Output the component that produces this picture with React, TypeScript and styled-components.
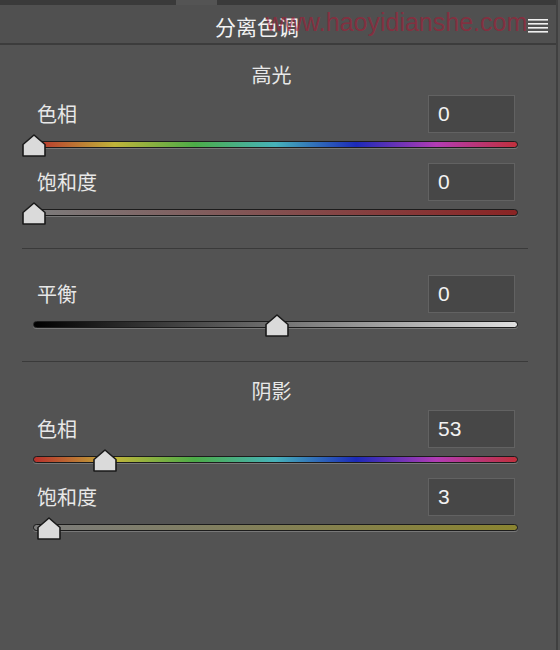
import React from 'react';
import styled, { createGlobalStyle } from 'styled-components';

const GlobalStyle = createGlobalStyle`
  body {
    margin: 0;
    background: #535353;
  }
`;

const Panel = styled.div`
  width: 556px;
  height: 650px;
  background: #535353;
  border-right: 2px solid #404040;
  font-family: 'Noto Sans CJK SC', 'Liberation Sans', sans-serif;
  color: #e8e8e8;
  overflow: hidden;
`;

const TopStrip = styled.div`
  display: flex;
  height: 5px;
  background: #3a3a3a;
`;

const Tab = styled.div`
  margin-left: 176px;
  width: 41px;
  background: #545454;
`;

const Header = styled.div`
  position: relative;
  display: grid;
  grid-template-columns: 514px 1fr;
  align-items: center;
  height: 38px;
  background: #505050;
  border-bottom: 2px solid #3c3c3c;
`;

const Title = styled.div`
  text-align: center;
  font-size: 21px;
  line-height: 24px;
  padding-top: 3px;
  color: #f2f2f2;
`;

const MenuButton = styled.div`
  display: flex;
  padding-left: 14px;
  padding-top: 3px;
`;

const Watermark = styled.div`
  position: absolute;
  top: 3px;
  left: 266px;
  font-family: 'Liberation Sans', Arial, sans-serif;
  font-size: 25px;
  color: rgba(175, 20, 50, 0.55);
  pointer-events: none;
  white-space: nowrap;
`;

const Body = styled.div`
  padding: 0 28px 0 22px;
`;

const SectionTitle = styled.div<{ $top: number; $bottom: number }>`
  height: 22px;
  line-height: 22px;
  padding-top: ${(p) => p.$top}px;
  padding-right: 7px;
  margin-bottom: ${(p) => p.$bottom}px;
  text-align: center;
  font-size: 20px;
`;

const Row = styled.div<{ $gap?: number }>`
  margin-top: ${(p) => p.$gap ?? 0}px;
`;

const RowTop = styled.div`
  display: flex;
  justify-content: space-between;
  align-items: center;
  height: 38px;
  padding: 0 13px 0 15px;
`;

const Label = styled.div`
  font-size: 20px;
  line-height: 24px;
`;

const ValueBox = styled.div`
  box-sizing: border-box;
  width: 87px;
  height: 38px;
  padding-left: 9px;
  background: #474747;
  border: 1px solid #626262;
  font-family: 'Liberation Sans', Arial, sans-serif;
  font-size: 21px;
  line-height: 36px;
  color: #f2f2f2;
`;

const TrackArea = styled.div`
  position: relative;
  box-sizing: border-box;
  height: 30px;
  padding-top: 8px;
  margin: 0 10px 0 11px;
`;

const Track = styled.div<{ $fill: string }>`
  box-sizing: border-box;
  height: 7px;
  border: 1px solid #1c1c1c;
  border-radius: 4px;
  background: ${(p) => p.$fill};
  box-shadow: 0 1px 0 rgba(255, 255, 255, 0.22);
`;

const Thumb = styled.svg`
  position: absolute;
  top: 1px;
  width: 24px;
  height: 23px;
`;

const Divider = styled.div<{ $top: number }>`
  height: 1px;
  margin-top: ${(p) => p.$top}px;
  background: #3a3a3a;
`;

const HUE =
  'linear-gradient(to right, #b8302c 0%, #c0b43a 16.7%, #4cac48 33.3%, #46b2ba 50%, #1c2ab8 66.7%, #b23cb4 83.3%, #c0303c 100%)';
const RED_SAT = 'linear-gradient(to right, #7c7c7c, #8a2424)';
const YELLOW_SAT = 'linear-gradient(to right, #7c7c7c, #8a8430)';
const BALANCE = 'linear-gradient(to right, #000, #e0e0e0)';

interface SliderProps {
  label: string;
  value: number;
  min: number;
  max: number;
  fill: string;
  gap?: number;
}

const Slider: React.FC<SliderProps> = ({ label, value, min, max, fill, gap }) => {
  const frac = (value - min) / (max - min);
  return (
    <Row $gap={gap}>
      <RowTop>
        <Label>{label}</Label>
        <ValueBox>{value}</ValueBox>
      </RowTop>
      <TrackArea>
        <Track $fill={fill} />
        <Thumb style={{ left: `calc(${frac * 100}% - 11px)` }} viewBox="0 0 24 23">
          <polygon
            points="12,1 23,10.5 23,22 1,22 1,10.5"
            fill="#dadada"
            stroke="#1a1a1a"
            strokeWidth="1.6"
            strokeLinejoin="round"
          />
        </Thumb>
      </TrackArea>
    </Row>
  );
};

const App: React.FC = () => (
  <>
    <GlobalStyle />
    <Panel>
      <TopStrip>
        <Tab />
      </TopStrip>
      <Header>
        <Title>分离色调</Title>
        <MenuButton>
          <svg width="20" height="15" viewBox="0 0 20 15">
            {[1, 5, 9, 13].map((y) => (
              <rect key={y} x="0" y={y} width="20" height="1.6" fill="#f0f0f0" />
            ))}
          </svg>
        </MenuButton>
        <Watermark>www.haoyidianshe.com</Watermark>
      </Header>
      <Body>
        <SectionTitle $top={19} $bottom={9}>高光</SectionTitle>
        <Slider label="色相" value={0} min={0} max={360} fill={HUE} />
        <Slider label="饱和度" value={0} min={0} max={100} fill={RED_SAT} />
        <Divider $top={17} />
        <Slider label="平衡" value={0} min={-100} max={100} fill={BALANCE} gap={26} />
        <Divider $top={18} />
        <SectionTitle $top={18} $bottom={8}>阴影</SectionTitle>
        <Slider label="色相" value={53} min={0} max={360} fill={HUE} />
        <Slider label="饱和度" value={3} min={0} max={100} fill={YELLOW_SAT} />
      </Body>
    </Panel>
  </>
);

export default App;
